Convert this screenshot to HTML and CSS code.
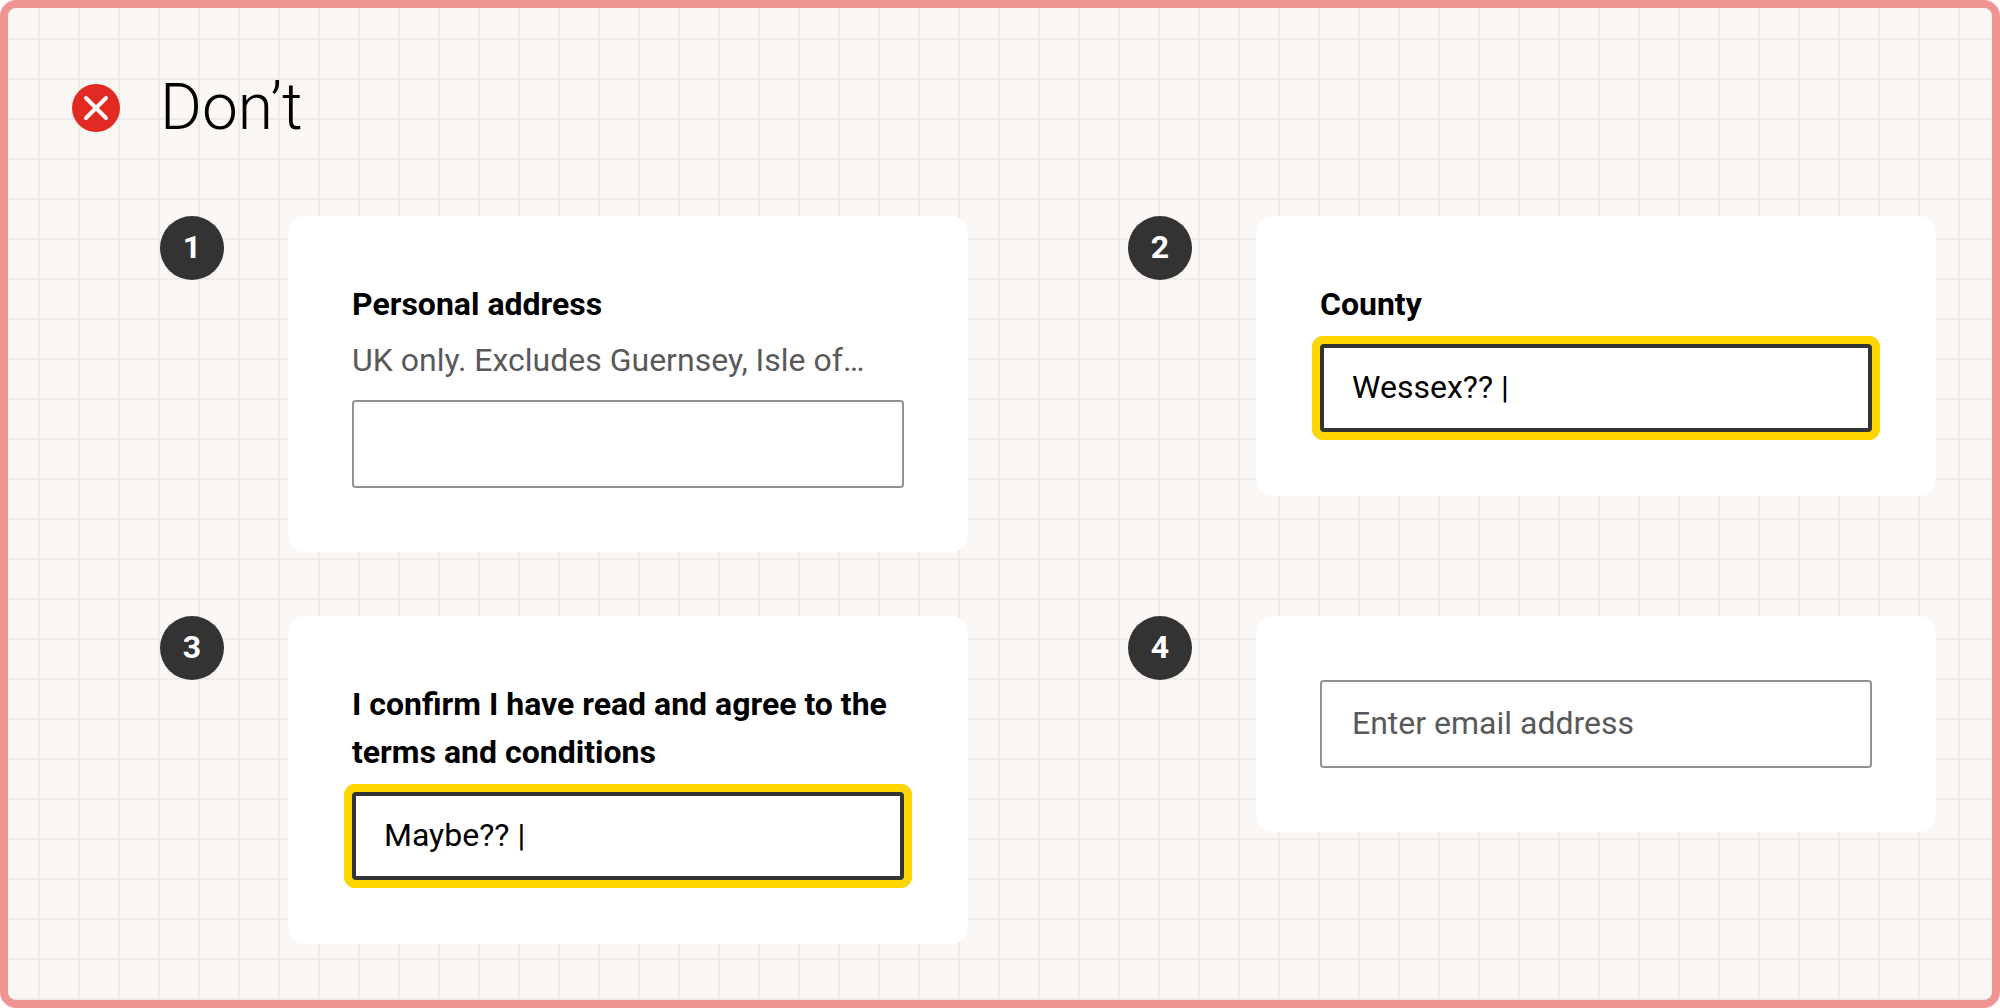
FILE: index.html
```html
<!DOCTYPE html>
<html lang="en">
<head>
<meta charset="utf-8">
<meta name="viewport" content="width=device-width, initial-scale=1">
<title>Don’t</title>
<link rel="stylesheet" href="styles.css">
</head>
<body>
<main class="panel">
  <header class="panel-header">
    <svg class="icon" viewBox="0 0 48 48" aria-hidden="true">
      <circle cx="24" cy="24" r="24" fill="#e32a22"/>
      <path d="M14 14 34 34M34 14 14 34" stroke="#fbf7f4" stroke-width="4" stroke-linecap="round"/>
    </svg>
    <h1 class="title">Don’t</h1>
  </header>
  <div class="examples">
    <section class="example">
      <span class="badge">1</span>
      <div class="card">
        <label class="label" for="address">Personal address</label>
        <p class="hint" id="address-hint">UK only. Excludes Guernsey, Isle of…</p>
        <input class="input" id="address" type="text" aria-describedby="address-hint">
      </div>
    </section>
    <section class="example">
      <span class="badge">2</span>
      <div class="card">
        <label class="label" for="county">County</label>
        <input class="input input-focused" id="county" type="text" value="Wessex?? |">
      </div>
    </section>
    <section class="example">
      <span class="badge">3</span>
      <div class="card">
        <label class="label" for="terms">I confirm I have read and agree to the terms and conditions</label>
        <input class="input input-focused" id="terms" type="text" value="Maybe?? |">
      </div>
    </section>
    <section class="example">
      <span class="badge">4</span>
      <div class="card">
        <input class="input" id="email" type="email" placeholder="Enter email address" aria-label="Enter email address">
      </div>
    </section>
  </div>
</main>
</body>
</html>
```

FILE: styles.css
```css
* {
  box-sizing: border-box;
}

body {
  margin: 0;
  background: #fff;
  color: #000;
  font-family: Roboto, "Liberation Sans", sans-serif;
  font-size: 32px;
  line-height: 48px;
}

.panel {
  min-height: 100vh;
  padding: 64px 56px 56px 64px;
  border: 8px solid #f09491;
  border-radius: 16px;
  background-color: #fbf7f4;
  background-image:
    linear-gradient(to left, #efebe8 2px, transparent 2px),
    linear-gradient(to top, #efebe8 2px, transparent 2px);
  background-size: 40px 40px;
  background-position: -8px -8px;
}

.panel-header {
  display: flex;
  align-items: center;
  gap: 40px;
  margin-bottom: 72px;
}

.icon {
  width: 48px;
  height: 48px;
}

.title {
  margin: 0;
  font-size: 64px;
  font-weight: 300;
  line-height: 72px;
}

.examples {
  display: grid;
  grid-template-columns: 1fr 1fr;
  align-items: start;
  gap: 64px 160px;
  padding-left: 88px;
}

.example {
  display: flex;
  align-items: flex-start;
  gap: 64px;
}

.badge {
  flex: none;
  width: 64px;
  height: 64px;
  border-radius: 50%;
  background: #333;
  color: #fff;
  font-weight: 700;
  line-height: 62px;
  text-align: center;
}

.card {
  flex: 1;
  min-width: 0;
  padding: 64px;
  border-radius: 16px;
  background: #fff;
}

.label {
  display: block;
  margin-bottom: 16px;
  font-weight: 700;
}

.hint {
  margin: -8px 0 16px;
  color: #595959;
}

.input {
  display: block;
  width: 100%;
  height: 88px;
  padding: 0 30px 2px;
  border: 2px solid #919191;
  border-radius: 4px;
  outline: none;
  background: #fff;
  color: #000;
  font: inherit;
}

.input::placeholder {
  color: #595959;
  opacity: 1;
}

.input-focused {
  padding: 0 28px 2px;
  border: 4px solid #333;
  box-shadow: 0 0 0 8px #ffd500;
}
```
